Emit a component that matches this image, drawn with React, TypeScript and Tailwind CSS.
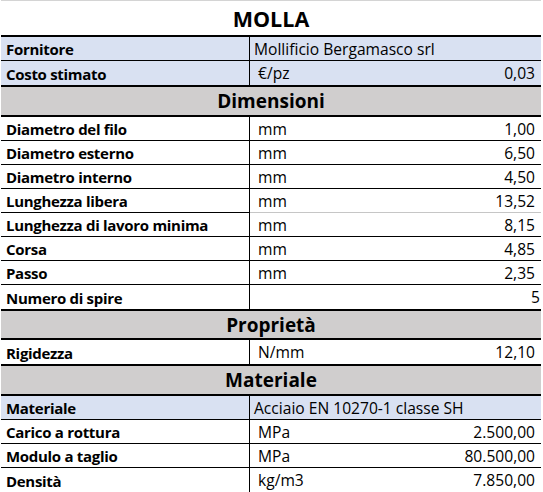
import React from "react";

type Row = {
  label: string;
  unit?: string;
  value?: string;
  span?: string;
  blue?: boolean;
  last?: boolean;
  valuePad?: string;
  lightRight?: boolean;
};

function DataRow({ r }: { r: Row }) {
  const bg = r.blue ? "bg-[#d9e1f2]" : "bg-white";
  const leftB = r.last ? "" : "border-b border-black";
  const rightB = r.last ? "" : r.lightRight ? "border-b border-[#c6c6c6]" : "border-b border-black";
  return (
    <div className={`flex h-[24px] ${bg}`}>
      <div
        className={`w-[249px] shrink-0 border-r border-r-black ${leftB} flex items-center pl-[5px] pt-[2px] font-bold text-[15px] tracking-[-0.3px] text-black`}
      >
        {r.label}
      </div>
      {r.span !== undefined ? (
        <div className={`flex-1 flex items-center pl-[4px] pt-[2px] text-[15.6px] text-black ${rightB}`}>{r.span}</div>
      ) : (
        <div className={`flex-1 flex items-center justify-between pl-[8px] pt-[2px] text-[15.6px] text-black ${rightB}`}>
          <span>{r.unit}</span>
          <span className={r.valuePad ?? "pr-[6px]"}>{r.value}</span>
        </div>
      )}
    </div>
  );
}

function Section({ title, h }: { title: string; h: string }) {
  return (
    <div className={`border-y-2 border-black bg-[#d0cece] ${h} flex items-center justify-center pt-[1px] font-bold text-[19px] text-black`}>
      {title}
    </div>
  );
}

export default function App() {
  return (
    <div
      className="w-[543px] h-[492px] bg-white overflow-hidden"
      style={{ fontFamily: "'Open Sans', 'Liberation Sans', sans-serif" }}
    >
      <div className="ml-[1px] w-[540px]">
        <div className="h-[35px] border-t border-[#d4d4d4] flex items-center justify-center pt-[2px] font-bold text-[21.5px] text-black">
          MOLLA
        </div>
        <div className="border-t-2 border-black" />
        <DataRow r={{ label: "Fornitore", span: "Mollificio Bergamasco srl", blue: true }} />
        <DataRow r={{ label: "Costo stimato", unit: "€/pz", value: "0,03", blue: true, last: true }} />
        <Section title="Dimensioni" h="h-[32px]" />
        <DataRow r={{ label: "Diametro del filo", unit: "mm", value: "1,00" }} />
        <DataRow r={{ label: "Diametro esterno", unit: "mm", value: "6,50" }} />
        <DataRow r={{ label: "Diametro interno", unit: "mm", value: "4,50" }} />
        <DataRow r={{ label: "Lunghezza libera", unit: "mm", value: "13,52", lightRight: true }} />
        <DataRow r={{ label: "Lunghezza di lavoro minima", unit: "mm", value: "8,15" }} />
        <DataRow r={{ label: "Corsa", unit: "mm", value: "4,85" }} />
        <DataRow r={{ label: "Passo", unit: "mm", value: "2,35" }} />
        <DataRow r={{ label: "Numero di spire", unit: "", value: "5", last: true, valuePad: "pr-[1px]" }} />
        <Section title="Proprietà" h="h-[31px]" />
        <DataRow r={{ label: "Rigidezza", unit: "N/mm", value: "12,10", last: true }} />
        <Section title="Materiale" h="h-[32px]" />
        <DataRow r={{ label: "Materiale", span: "Acciaio EN 10270-1 classe SH", blue: true }} />
        <DataRow r={{ label: "Carico a rottura", unit: "MPa", value: "2.500,00" }} />
        <DataRow r={{ label: "Modulo a taglio", unit: "MPa", value: "80.500,00" }} />
        <DataRow r={{ label: "Densità", unit: "kg/m3", value: "7.850,00", last: true }} />
      </div>
    </div>
  );
}
